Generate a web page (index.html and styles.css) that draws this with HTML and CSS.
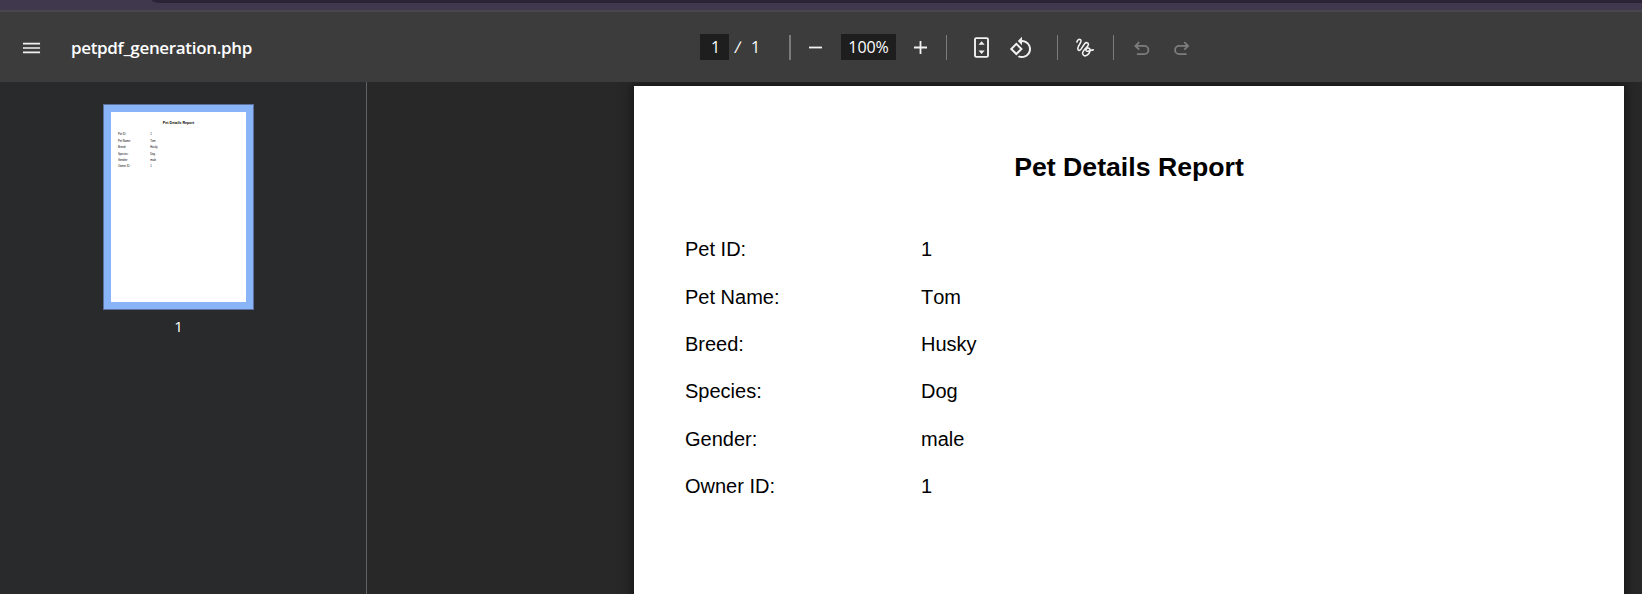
FILE: index.html
```
<!DOCTYPE html>
<html lang="en">
<head>
<meta charset="utf-8">
<title>petpdf_generation.php</title>
<link rel="stylesheet" href="styles.css">
</head>
<body>
<div class="viewer">
  <div class="browser-edge"><div class="address-bar"></div></div>
  <header class="toolbar">
    <div class="toolbar-start">
      <svg class="menu" viewBox="0 0 20 14"><path d="M1 2.5h18M1 7h18M1 11.5h18"/></svg>
      <span class="filename">petpdf_generation.php</span>
    </div>
    <div class="toolbar-center">
      <span class="field page-field">1</span>
      <span class="slash">/</span>
      <span class="page-count">1</span>
      <i class="rule rule-wide"></i>
      <svg class="minus" viewBox="0 0 14 14"><path d="M0 7.5h13"/></svg>
      <span class="field zoom-field">100%</span>
      <svg class="plus" viewBox="0 0 14 14"><path d="M0 7.5h13M6.5 1v13"/></svg>
      <i class="rule rule-zoom"></i>
      <svg class="fit" viewBox="0 0 16 22"><rect x="1" y="1.1" width="13" height="18.8" rx="1.3"/><path d="M4.5 7.7h6.2L7.6 4.3zM4.5 13.5h6.2l-3.1 3.4z"/></svg>
      <svg class="rotate" viewBox="0 0 24 24"><path d="M7.34 6.41L.86 12.9l6.49 6.48 6.49-6.48-6.5-6.49zM3.69 12.9l3.66-3.66L11 12.9l-3.66 3.66-3.65-3.66zm15.67-6.26C17.61 4.88 15.3 4 13 4V.76L8.76 5 13 9.24V6c1.79 0 3.58.68 4.95 2.05 2.73 2.73 2.73 7.17 0 9.9C16.58 19.32 14.79 20 13 20c-.97 0-1.94-.21-2.84-.61l-1.49 1.49C10.02 21.62 11.51 22 13 22c2.3 0 4.61-.88 6.36-2.64 3.52-3.51 3.52-9.21 0-12.72z"/></svg>
      <i class="rule rule-view"></i>
      <svg class="ink" viewBox="0 0 18 20"><path d="M.9 3.9C1.6 1.7 3.2.9 4.5 1.6C6.9 3.1 2 7.4 1.8 10.2C1.7 12.9 3.7 12.9 5 11.1L8.6 5.8C10 3.9 12.6 4.5 12.4 6.6C12.2 9 6.6 11.8 6.6 15.3C6.6 18 9.4 18.5 11.5 16.9C14 15 15 11.3 13 10.2C11.4 9.4 9.4 11 10.1 12.6C11 14.4 14.2 12 17.2 11.9"/></svg>
      <i class="rule rule-ink"></i>
      <svg class="history undo" viewBox="0 0 16 15"><path d="M5.2 1.1L1.4 4.9l3.8 3.8M1.7 4.9h8.6a4 4 0 0 1 0 8.2H2.9"/></svg>
      <svg class="history redo" viewBox="0 0 16 15"><path d="M10.3 1.1l3.8 3.8-3.8 3.8M13.8 4.9H5.2a4 4 0 0 0 0 8.2h7.4"/></svg>
    </div>
  </header>
  <main class="workspace">
    <aside class="sidebar">
      <div class="thumbnail">
        <div class="thumbnail-page">
          <article class="sheet sheet-mini">
            <h2 class="report-title">Pet Details Report</h2>
            <dl class="details">
              <dt>Pet ID:</dt><dd>1</dd>
              <dt>Pet Name:</dt><dd>Tom</dd>
              <dt>Breed:</dt><dd>Husky</dd>
              <dt>Species:</dt><dd>Dog</dd>
              <dt>Gender:</dt><dd>male</dd>
              <dt>Owner ID:</dt><dd>1</dd>
            </dl>
          </article>
        </div>
      </div>
      <span class="thumbnail-label">1</span>
    </aside>
    <section class="canvas">
      <article class="sheet">
        <h1 class="report-title">Pet Details Report</h1>
        <dl class="details">
          <dt>Pet ID:</dt><dd>1</dd>
          <dt>Pet Name:</dt><dd>Tom</dd>
          <dt>Breed:</dt><dd>Husky</dd>
          <dt>Species:</dt><dd>Dog</dd>
          <dt>Gender:</dt><dd>male</dd>
          <dt>Owner ID:</dt><dd>1</dd>
        </dl>
      </article>
    </section>
  </main>
</div>
</body>
</html>
```
FILE: styles.css
```
* { box-sizing: border-box; }
body { margin: 0; background: #282828; }
.viewer {
  display: flex;
  flex-direction: column;
  height: 594px;
  overflow: hidden;
  font-family: "Open Sans", "Noto Sans", sans-serif;
  color: #fff;
}
.browser-edge {
  flex: none;
  height: 12px;
  padding-left: 152px;
  background: #40384d;
  border-bottom: 2px solid #4a464e;
}
.address-bar { height: 3px; background: #2b2336; border-bottom-left-radius: 8px 3px; }

.toolbar { display: flex; flex: none; height: 70px; background: #3c3c3c; }
.toolbar-start { display: flex; align-items: center; width: 700px; padding: 1px 0 0 22px; }
.toolbar-center { display: flex; align-items: center; }
.toolbar svg { display: block; flex: none; fill: none; stroke: #f1f1f1; }
.toolbar .menu { width: 19px; height: 14px; stroke-width: 1.8; }
.filename { margin: 1px 0 0 30px; font-size: 17px; font-weight: 600; letter-spacing: -0.33px; line-height: 24px; }
.field { height: 26px; background: #1e1e1e; text-align: center; font-size: 16px; line-height: 26px; }
.page-field { width: 29px; padding-left: 2px; }
.slash { width: 8px; margin-left: 6px; font-size: 16px; line-height: 26px; transform: skewX(-9deg); }
.page-count { width: 10px; margin-left: 8px; font-size: 16px; line-height: 26px; }
.rule { flex: none; width: 1px; height: 25px; margin-top: 1px; background: #7b7b7b; }
.rule-wide { width: 2px; margin-left: 28px; }
.toolbar .minus { width: 14px; height: 14px; margin-left: 18px; stroke-width: 1.8; }
.zoom-field { width: 55px; margin-left: 18px; letter-spacing: -0.1px; }
.toolbar .plus { width: 14px; height: 14px; margin-left: 18px; stroke-width: 1.8; }
.rule-zoom { margin-left: 18px; }
.toolbar .fit { width: 16px; height: 22px; margin: 1px 0 0 27px; stroke-width: 1.9; }
.toolbar .fit path { fill: #f1f1f1; stroke: none; }
.toolbar .rotate { width: 24px; height: 24px; margin: 2px 0 0 19px; fill: #f1f1f1; stroke: none; }
.rule-view { margin-left: 24px; }
.toolbar .ink { width: 18px; height: 20px; margin: 1px 0 0 18px; stroke-width: 1.6; stroke-linecap: round; }
.rule-ink { margin-left: 19px; }
.toolbar .history { width: 16px; height: 15px; margin-top: 2px; stroke: #7d7d7d; stroke-width: 1.8; }
.toolbar .undo { margin-left: 20px; }
.toolbar .redo { margin-left: 24px; }

.workspace { display: flex; flex: 1; min-height: 0; }
.sidebar {
  display: flex;
  flex: none;
  flex-direction: column;
  align-items: flex-start;
  width: 367px;
  padding: 22px 0 0 103px;
  background: #292a2b;
  border-right: 1px solid #616161;
}
.thumbnail { width: 151px; height: 206px; padding: 7px; background: #8ab4f8; border: 1px solid #5b719c; }
.thumbnail-page { width: 135px; height: 190px; overflow: hidden; background: #fff; }
.thumbnail-label { width: 151px; margin-top: 4px; text-align: center; font-size: 15px; line-height: 24px; }
.canvas { flex: 1; min-width: 0; padding: 4px 18px 0 267px; overflow: hidden; }
.sheet {
  width: 990px;
  height: 1393px;
  padding: 64px 51px 0;
  background: #fff;
  color: #000;
  box-shadow: 0 0 10px 2px #151515;
  font-family: "Liberation Sans", Arial, sans-serif;
}
.sheet-mini { box-shadow: none; transform: scale(0.13636); transform-origin: 0 0; }
.report-title { margin: 0; text-align: center; font-size: 26.67px; font-weight: 700; line-height: 34px; }
.details {
  display: grid;
  grid-template-columns: 236px 1fr;
  grid-template-rows: 48px 47px 47px 48px 47px 47px;
  margin: 42px 0 0;
  font-size: 20px;
  font-kerning: none;
  line-height: 47px;
}
.details dt, .details dd { margin: 0; }
```
